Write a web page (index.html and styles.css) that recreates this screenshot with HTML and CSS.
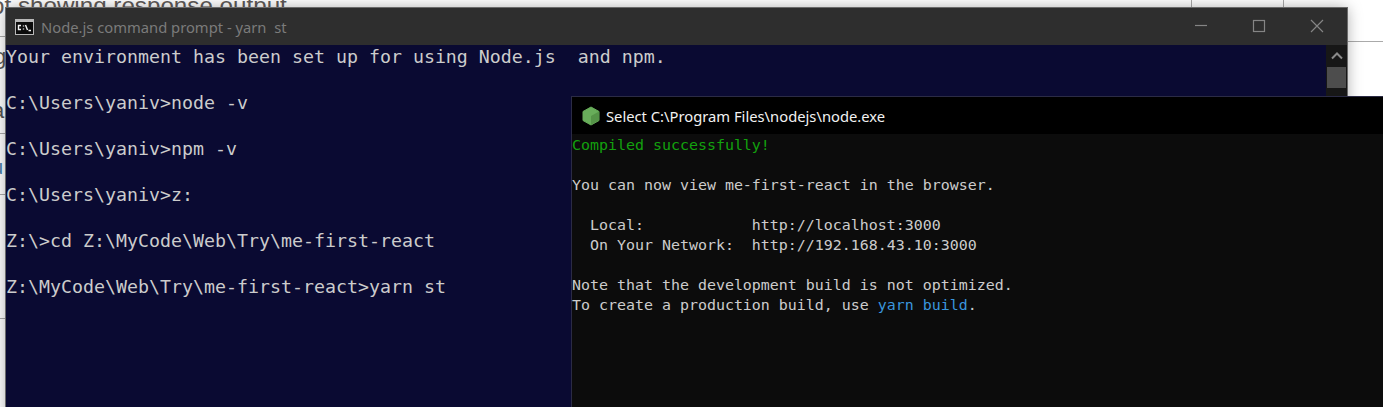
FILE: index.html
```html
<!DOCTYPE html>
<html lang="en">
<head>
<meta charset="utf-8">
<title>Node.js command prompt</title>
<link rel="stylesheet" href="styles.css">
</head>
<body>
<div class="desktop">
  <div class="page-text">ot showing response output</div>
  <div class="rule rule-a"></div>
  <div class="rule rule-b"></div>
  <div class="rule rule-c"></div>
  <div class="rule rule-d"></div>
  <div class="rule rule-e"></div>
  <div class="rule-v rule-v-a"></div>
  <div class="rule-v rule-v-b"></div>
  <div class="frag frag-g">g</div>
  <div class="frag frag-a">a</div>
  <div class="frag frag-u">u</div>

  <section class="window cmd">
    <header class="cmd-bar">
      <svg class="cmd-icon" width="19" height="16" viewBox="0 0 19 16">
        <rect x="0.5" y="0.5" width="18" height="15" fill="#0c0c0c" stroke="#b8b8b8"/>
        <rect x="1" y="1" width="17" height="2" fill="#b8b8b8"/>
        <path d="M6 6.5H3.5V10.5H6M8.5 6.5V7.5M8.5 9.5V10.5M10.5 6L12.5 11M13.5 11.5H16" stroke="#f4f4f4" stroke-width="1.4" fill="none"/>
      </svg>
      <span class="cmd-title">Node.js command prompt - yarn&nbsp; st</span>
      <div class="controls">
        <svg class="ctl" width="58" height="37" viewBox="0 0 58 37"><path d="M23 17.5H35" stroke="#858585" stroke-width="1.2"/></svg>
        <svg class="ctl" width="58" height="37" viewBox="0 0 58 37"><rect x="23.5" y="12.5" width="11" height="11" fill="none" stroke="#858585" stroke-width="1.2"/></svg>
        <svg class="ctl" width="58" height="37" viewBox="0 0 58 37"><path d="M23 12L35 24M35 12L23 24" stroke="#858585" stroke-width="1.2" fill="none"/></svg>
      </div>
    </header>
    <div class="cmd-body">
      <pre class="cmd-text">Your environment has been set up for using Node.js  and npm.

C:\Users\yaniv&gt;node -v

C:\Users\yaniv&gt;npm -v

C:\Users\yaniv&gt;z:

Z:\&gt;cd Z:\MyCode\Web\Try\me-first-react

Z:\MyCode\Web\Try\me-first-react&gt;yarn st</pre>
      <div class="scrollbar">
        <svg class="scroll-up" width="20" height="20" viewBox="0 0 20 20"><path d="M5 12L10 7L15 12" stroke="#8a8a8a" stroke-width="2" fill="none"/></svg>
        <div class="scroll-thumb"></div>
      </div>
    </div>
  </section>

  <section class="window node">
    <header class="node-bar">
      <svg class="node-icon" width="18" height="20" viewBox="0 0 18 20">
        <path d="M9 1L17 5.5V14.5L9 19L1 14.5V5.5Z" fill="#68ad5a" stroke="#68ad5a" stroke-linejoin="round"/>
        <path d="M9 10L17 5.5V14.5L9 19Z" fill="#559448"/>
      </svg>
      <span class="node-title">Select C:\Program Files\nodejs\node.exe</span>
    </header>
    <pre class="node-text"><span class="ok">Compiled successfully!</span>

You can now view me-first-react in the browser.

  Local:            http://localhost:3000
  On Your Network:  http://192.168.43.10:3000

Note that the development build is not optimized.
To create a production build, use <span class="cmdref">yarn build</span>.</pre>
  </section>
</div>
</body>
</html>
```
FILE: styles.css
```css
html, body {
  margin: 0;
  padding: 0;
  background: #fff;
  overflow: hidden;
}
.desktop {
  position: relative;
  width: 1383px;
  height: 407px;
  overflow: hidden;
  background: #fff;
}
.page-text {
  position: absolute;
  left: -9px;
  top: -7px;
  font: 24.2px/26px "Liberation Sans", sans-serif;
  color: #5f5a58;
  white-space: nowrap;
}
.rule { position: absolute; left: 0; width: 6px; height: 1px; background: #aaa; }
.rule-a { top: 36px; }
.rule-b { top: 194px; }
.rule-c { top: 318px; }
.rule-d { top: 133px; }
.rule-e { left: 1347px; top: 41px; width: 36px; }
.rule-v { position: absolute; top: 0; width: 1px; height: 8px; background: #aaa; }
.rule-v-a { left: 1191px; }
.rule-v-b { left: 1283px; }
.frag { position: absolute; font: 22px/26px "Liberation Sans", sans-serif; }
.frag-g { left: -6px; top: 44px; color: #555; }
.frag-a { left: -8px; top: 98px; color: #555; }
.frag-u { left: -8px; top: 154px; color: #4a7fa5; font-size: 20px; }

.window { position: absolute; }
.cmd {
  left: 6px;
  top: 8px;
  width: 1341px;
  height: 420px;
  display: flex;
  flex-direction: column;
  box-shadow: 0 0 14px rgba(0, 0, 0, 0.35);
  outline: 1px solid #6a6a6a;
}
.cmd-bar {
  height: 37px;
  flex: none;
  background: #2e2e2e;
  display: flex;
  align-items: center;
  padding-left: 9px;
}
.cmd-icon { flex: none; }
.cmd-title {
  margin-left: 7px;
  font: 14.75px "Noto Sans", sans-serif;
  color: #7b7b7b;
  white-space: nowrap;
}
.controls { margin-left: auto; margin-right: 1px; display: flex; }
.ctl { display: block; }
.cmd-body {
  flex: 1;
  display: flex;
  background: #0a0a32;
  min-height: 0;
}
.cmd-text {
  flex: 1;
  margin: 0;
  font: 18.27px/23px "DejaVu Sans Mono", monospace;
  color: #cccccc;
}
.scrollbar {
  width: 21px;
  flex: none;
  background: #171717;
  display: flex;
  flex-direction: column;
  align-items: center;
}
.scroll-up { height: 21px; margin-top: 1px; }
.scroll-thumb { width: 19px; height: 21px; background: #4d4d4d; }

.node {
  left: 571px;
  top: 96px;
  width: 830px;
  height: 330px;
  border: 1px solid #2b2b45;
  box-sizing: border-box;
  display: flex;
  flex-direction: column;
  background: #0c0c0c;
}
.node-bar {
  height: 37px;
  flex: none;
  background: #000;
  display: flex;
  align-items: center;
  padding-left: 10px;
}
.node-icon { flex: none; filter: blur(0.5px); }
.node-title {
  margin-left: 6px;
  font: 14.75px "Noto Sans", sans-serif;
  color: #f2f2f2;
  white-space: nowrap;
}
.node-text {
  margin: 0;
  padding-top: 1px;
  font: 14.95px/20px "DejaVu Sans Mono", monospace;
  color: #cccccc;
}
.ok { color: #13a10e; }
.cmdref { color: #3a96dd; }
```
